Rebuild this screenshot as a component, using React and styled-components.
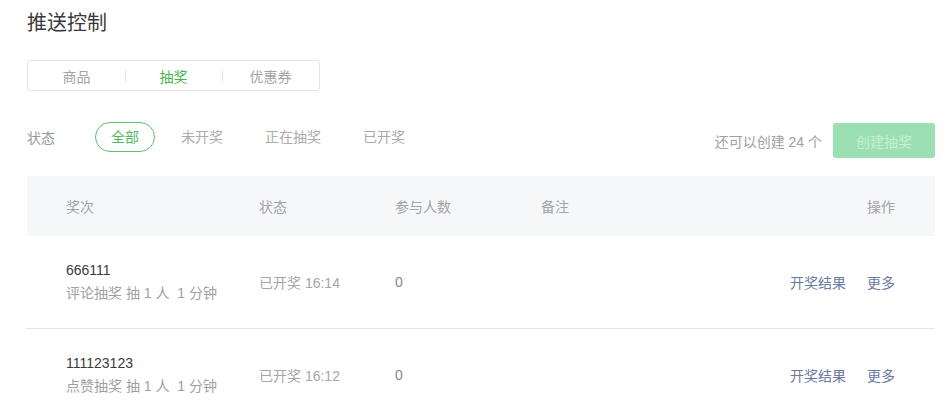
import React, { useState } from "react";
import styled, { createGlobalStyle } from "styled-components";

const GlobalStyle = createGlobalStyle`
  body {
    margin: 0;
    background: #fff;
    font-family: "Helvetica Neue", "Liberation Sans", Arial, "Noto Sans CJK SC", sans-serif;
    font-size: 14px;
    color: #333;
  }
`;

const Page = styled.div`
  padding: 9px 10px 0 27px;
`;

const Title = styled.h2`
  margin: 0;
  font-size: 20px;
  font-weight: 400;
  line-height: 28px;
  color: #3a3a3a;
`;

const Tabs = styled.div`
  margin-top: 23px;
  width: 291px;
  height: 29px;
  display: flex;
  border: 1px solid #e4e4e4;
  border-radius: 3px;
`;

const Tab = styled.div`
  flex: 1;
  display: flex;
  align-items: center;
  justify-content: center;
  position: relative;
  color: ${({ $active }) => ($active ? "#44b549" : "#a3a3a3")};

  &::before {
    content: "";
    display: ${({ $divider }) => ($divider ? "block" : "none")};
    position: absolute;
    left: 0;
    top: 9px;
    height: 12px;
    width: 1px;
    background: #e2e2e2;
  }
`;

const FilterRow = styled.div`
  margin-top: 31px;
  display: flex;
  align-items: flex-start;
  justify-content: space-between;
`;

const Filters = styled.div`
  display: flex;
  align-items: center;
  height: 30px;
`;

const Label = styled.span`
  width: 68px;
  color: #999;
`;

const Pill = styled.span`
  height: 28px;
  line-height: 28px;
  padding: 0 15px;
  margin-right: 10px;
  border-radius: 15px;
  border: 1px solid ${({ $active }) => ($active ? "#5ac06a" : "transparent")};
  color: ${({ $active }) => ($active ? "#52b95f" : "#ababab")};
  cursor: pointer;
`;

const CreateArea = styled.div`
  display: flex;
  align-items: center;
  margin-top: 1px;
`;

const Quota = styled.span`
  color: #a0a0a0;
  margin-right: 11px;
`;

const CreateButton = styled.button`
  width: 102px;
  height: 35px;
  border: none;
  border-radius: 3px;
  background: #9bdfb3;
  color: #c9eed4;
  font: inherit;
  font-size: 14px;
`;

const Table = styled.div`
  margin-top: 18px;
`;

const Grid = styled.div`
  display: grid;
  grid-template-columns: 193px 136px 146px 1fr 140px;
  align-items: center;
  padding: 0 40px 0 39px;
`;

const Head = styled(Grid)`
  height: 60px;
  background: #f6f7f9;
  color: #a3a3a3;
`;

const Row = styled(Grid)`
  height: 92px;
  border-bottom: 1px solid #e6e6e6;
`;

const Right = styled.div`
  text-align: right;
`;

const Name = styled.div`
  color: #3b3b3b;
  line-height: 23px;
`;

const Sub = styled.div`
  color: #a0a0a0;
  line-height: 23px;
  white-space: pre;
`;

const Muted = styled.div`
  color: #a6a6a6;
`;

const Count = styled.div`
  color: #888;
`;

const Actions = styled.div`
  display: flex;
  justify-content: flex-end;
  gap: 21px;
`;

const Link = styled.a`
  color: #6b7aa2;
  text-decoration: none;
  cursor: pointer;
`;

const rows = [
  { name: "666111", type: "评论抽奖", time: "16:14" },
  { name: "111123123", type: "点赞抽奖", time: "16:12" },
];

export default function App() {
  const [tab, setTab] = useState(1);
  const [filter, setFilter] = useState(0);
  const filters = ["全部", "未开奖", "正在抽奖", "已开奖"];

  return (
    <Page>
      <GlobalStyle />
      <Title>推送控制</Title>
      <Tabs>
        {["商品", "抽奖", "优惠券"].map((t, i) => (
          <Tab key={t} $active={i === tab} $divider={i > 0} onClick={() => setTab(i)}>
            {t}
          </Tab>
        ))}
      </Tabs>
      <FilterRow>
        <Filters>
          <Label>状态</Label>
          {filters.map((f, i) => (
            <Pill key={f} $active={i === filter} onClick={() => setFilter(i)}>
              {f}
            </Pill>
          ))}
        </Filters>
        <CreateArea>
          <Quota>还可以创建 24 个</Quota>
          <CreateButton disabled>创建抽奖</CreateButton>
        </CreateArea>
      </FilterRow>
      <Table>
        <Head>
          <div>奖次</div>
          <div>状态</div>
          <div>参与人数</div>
          <div>备注</div>
          <Right>操作</Right>
        </Head>
        {rows.map((r) => (
          <Row key={r.name}>
            <div>
              <Name>{r.name}</Name>
              <Sub>{r.type} 抽 1 人  1 分钟</Sub>
            </div>
            <Muted>已开奖 {r.time}</Muted>
            <Count>0</Count>
            <div />
            <Actions>
              <Link>开奖结果</Link>
              <Link>更多</Link>
            </Actions>
          </Row>
        ))}
      </Table>
    </Page>
  );
}
